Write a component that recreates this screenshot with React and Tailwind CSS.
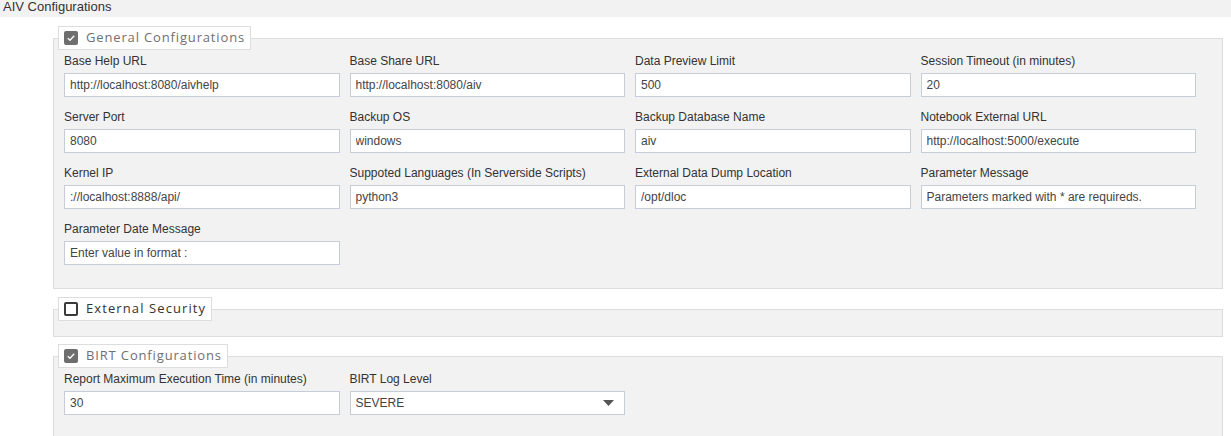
import React from 'react';

const general = [
  { label: 'Base Help URL', value: 'http://localhost:8080/aivhelp' },
  { label: 'Base Share URL', value: 'http://localhost:8080/aiv' },
  { label: 'Data Preview Limit', value: '500' },
  { label: 'Session Timeout (in minutes)', value: '20' },
  { label: 'Server Port', value: '8080' },
  { label: 'Backup OS', value: 'windows' },
  { label: 'Backup Database Name', value: 'aiv' },
  { label: 'Notebook External URL', value: 'http://localhost:5000/execute' },
  { label: 'Kernel IP', value: '://localhost:8888/api/' },
  { label: 'Suppoted Languages (In Serverside Scripts)', value: 'python3' },
  { label: 'External Data Dump Location', value: '/opt/dloc' },
  { label: 'Parameter Message', value: 'Parameters marked with * are requireds.' },
  { label: 'Parameter Date Message', value: 'Enter value in format :' },
];

function Checkbox({ checked }) {
  if (checked) {
    return (
      <span className="flex h-[14px] w-[14px] items-center justify-center rounded-[2px] bg-[#6e6e6e]">
        <svg width="10" height="10" viewBox="0 0 10 10" fill="none">
          <path d="M1.8 5.2 L4 7.3 L8.2 2.8" stroke="#fff" strokeWidth="1.3" />
        </svg>
      </span>
    );
  }
  return <span className="block h-[14px] w-[14px] rounded-[2px] border-2 border-[#3a3a3a] bg-white" />;
}

function Legend({ title, checked }) {
  return (
    <div className="-mt-[13px] ml-[4px] flex h-[24px] w-fit items-center gap-[8px] border border-[#dddddd] bg-white pl-[5px] pr-[5px]">
      <Checkbox checked={checked} />
      <span
        className={`text-[13px] tracking-[0.85px] ${checked ? 'text-[#707070]' : 'text-[#333333] tracking-[1.1px]'}`}
        style={{ fontFamily: '"Open Sans", sans-serif' }}
      >
        {title}
      </span>
    </div>
  );
}

function Field({ label, value, select }) {
  return (
    <div className="pr-[10px]">
      <div className="mb-[4px] h-[16px] text-[12px] leading-[16px] text-[#333333]">{label}</div>
      <div className="flex h-[24px] items-center border border-[#c6cdd8] bg-white pl-[5px] pr-[10px] text-[12px] text-[#444444]">
        <span className="flex-1 truncate">{value}</span>
        {select && (
          <svg width="11" height="6" viewBox="0 0 11 6">
            <path d="M0 0 L11 0 L5.5 6 Z" fill="#555" />
          </svg>
        )}
      </div>
    </div>
  );
}

export default function App() {
  return (
    <div className="min-h-[436px] bg-white" style={{ fontFamily: '"Liberation Sans", Arial, sans-serif' }}>
      <div className="h-[17px] bg-[#f2f2f2] pl-[3px] text-[13px] leading-[13px] text-[#333333]">AIV Configurations</div>

      <div className="pl-[53px] pr-[8px]">
        <div className="mt-[21px] border border-[#dddddd] bg-[#f2f2f2] pb-[23px]">
          <Legend title="General Configurations" checked />
          <div className="mt-[3px] grid grid-cols-4 gap-y-[12px] pl-[10px] pr-[16px]">
            {general.map((f) => (
              <Field key={f.label} label={f.label} value={f.value} />
            ))}
          </div>
        </div>

        <div className="mt-[20px] border border-[#dddddd] bg-[#f2f2f2] pb-[15px]">
          <Legend title="External Security" checked={false} />
        </div>

        <div className="mt-[19px] border border-b-0 border-[#dddddd] bg-[#f2f2f2] pb-[22px]">
          <Legend title="BIRT Configurations" checked />
          <div className="mt-[3px] grid grid-cols-4 pl-[10px] pr-[16px]">
            <Field label="Report Maximum Execution Time (in minutes)" value="30" />
            <Field label="BIRT Log Level" value="SEVERE" select />
          </div>
        </div>
      </div>
    </div>
  );
}
